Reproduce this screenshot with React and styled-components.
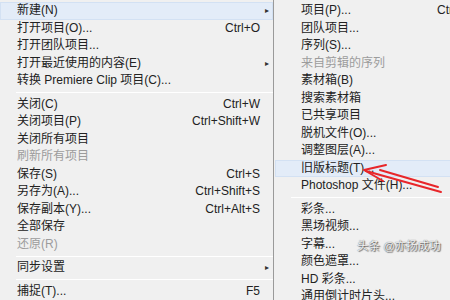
import React from "react";
import styled, { createGlobalStyle } from "styled-components";

const GlobalStyle = createGlobalStyle`
  html, body {
    margin: 0;
    padding: 0;
    background: #f0f0f0;
    overflow: hidden;
  }
  body {
    font-family: "Liberation Sans", "Noto Sans CJK SC", sans-serif;
    font-size: 12px;
    color: #222;
  }
`;

const fileMenu = [
  { label: "新建(N)", arrow: true, active: true },
  { label: "打开项目(O)...", shortcut: "Ctrl+O" },
  { label: "打开团队项目..." },
  { label: "打开最近使用的内容(E)", arrow: true },
  { label: "转换 Premiere Clip 项目(C)..." },
  { sep: true },
  { label: "关闭(C)", shortcut: "Ctrl+W" },
  { label: "关闭项目(P)", shortcut: "Ctrl+Shift+W" },
  { label: "关闭所有项目" },
  { label: "刷新所有项目", disabled: true },
  { label: "保存(S)", shortcut: "Ctrl+S" },
  { label: "另存为(A)...", shortcut: "Ctrl+Shift+S" },
  { label: "保存副本(Y)...", shortcut: "Ctrl+Alt+S" },
  { label: "全部保存" },
  { label: "还原(R)", disabled: true },
  { sep: true },
  { label: "同步设置", arrow: true },
  { sep: true },
  { label: "捕捉(T)...", shortcut: "F5" },
];

const newMenu = [
  { label: "项目(P)...", shortcut: "Ctrl+Alt+N" },
  { label: "团队项目..." },
  { label: "序列(S)..." },
  { label: "来自剪辑的序列", disabled: true },
  { label: "素材箱(B)" },
  { label: "搜索素材箱" },
  { label: "已共享项目" },
  { label: "脱机文件(O)..." },
  { label: "调整图层(A)..." },
  { label: "旧版标题(T)...", active: true },
  { label: "Photoshop 文件(H)..." },
  { sep: true },
  { label: "彩条..." },
  { label: "黑场视频..." },
  { label: "字幕..." },
  { label: "颜色遮罩..." },
  { label: "HD 彩条..." },
  { label: "通用倒计时片头..." },
];

export default function App() {
  return (
    <>
      <GlobalStyle />
      <Screen>
        <FileMenu>
          {fileMenu.map((item, i) =>
            item.sep ? (
              <Separator key={i} />
            ) : (
              <FileRow key={i} $active={item.active} $disabled={item.disabled}>
                <Label>{item.label}</Label>
                <Shortcut>{item.shortcut}</Shortcut>
                <Arrow>{item.arrow ? "▸" : ""}</Arrow>
              </FileRow>
            )
          )}
        </FileMenu>
        <SubMenu>
          {newMenu.map((item, i) =>
            item.sep ? (
              <Separator key={i} />
            ) : (
              <SubRow key={i} $active={item.active} $disabled={item.disabled}>
                <Label>{item.label}</Label>
                <Shortcut $left>{item.shortcut}</Shortcut>
              </SubRow>
            )
          )}
        </SubMenu>
        <Annotation width="450" height="300" viewBox="0 0 450 300">
          <g stroke="#e8262a" strokeWidth="2" fill="none" strokeLinecap="round" strokeLinejoin="round">
            <polyline points="386,165 364,170 383,181" />
            <line x1="366" y1="171" x2="441" y2="192" />
            <line x1="380" y1="170" x2="438" y2="187" />
          </g>
        </Annotation>
        <Watermark>头条 @亦扬成功</Watermark>
      </Screen>
    </>
  );
}

const Screen = styled.div`
  position: relative;
  display: flex;
  width: 450px;
  height: 300px;
  overflow: hidden;
`;

const FileMenu = styled.div`
  display: flex;
  flex-direction: column;
  flex: 0 0 273px;
  padding-top: 2px;
  background: #f0f0f0;
  border-right: 1px solid #9a9a9a;
`;

const SubMenu = styled.div`
  display: flex;
  flex-direction: column;
  flex: 0 0 260px;
  padding-top: 2px;
  padding-left: 1px;
  background: #f0f0f0;
`;

const rowBase = `
  display: grid;
  align-items: center;
  height: 17.5px;
  line-height: 17.5px;
  white-space: nowrap;
  box-sizing: border-box;
`;

const FileRow = styled.div`
  ${rowBase}
  grid-template-columns: 1fr auto 13px;
  padding-left: 17px;
  color: ${(p) => (p.$disabled ? "#9c9c9c" : "#222")};
  background: ${(p) => (p.$active ? "#e3ecf8" : "transparent")};
  box-shadow: ${(p) => (p.$active ? "inset 0 0 0 1px #d3e1f3" : "none")};
`;

const SubRow = styled.div`
  ${rowBase}
  grid-template-columns: 136px 1fr;
  padding-left: 26px;
  color: ${(p) => (p.$disabled ? "#9c9c9c" : "#222")};
  background: ${(p) => (p.$active ? "#e3ecf8" : "transparent")};
  box-shadow: ${(p) => (p.$active ? "inset 0 0 0 1px #d3e1f3" : "none")};
`;

const Label = styled.span`
  overflow: hidden;
`;

const Shortcut = styled.span`
  text-align: ${(p) => (p.$left ? "left" : "right")};
`;

const Arrow = styled.span`
  font-size: 8px;
  text-align: right;
  padding-right: 4px;
  color: #333;
`;

const Separator = styled.div`
  height: 1px;
  margin: 2.5px 0 2.5px 16px;
  background: #d5d5d5;
  border-bottom: 1px solid #ffffff;
`;

const Annotation = styled.svg`
  position: absolute;
  left: 0;
  top: 0;
  pointer-events: none;
`;

const Watermark = styled.div`
  position: absolute;
  left: 357px;
  top: 237px;
  white-space: nowrap;
  font-size: 11.5px;
  color: rgba(255, 255, 255, 0.95);
  text-shadow: 0 0 1px #444, 1px 1px 1px #666;
`;
